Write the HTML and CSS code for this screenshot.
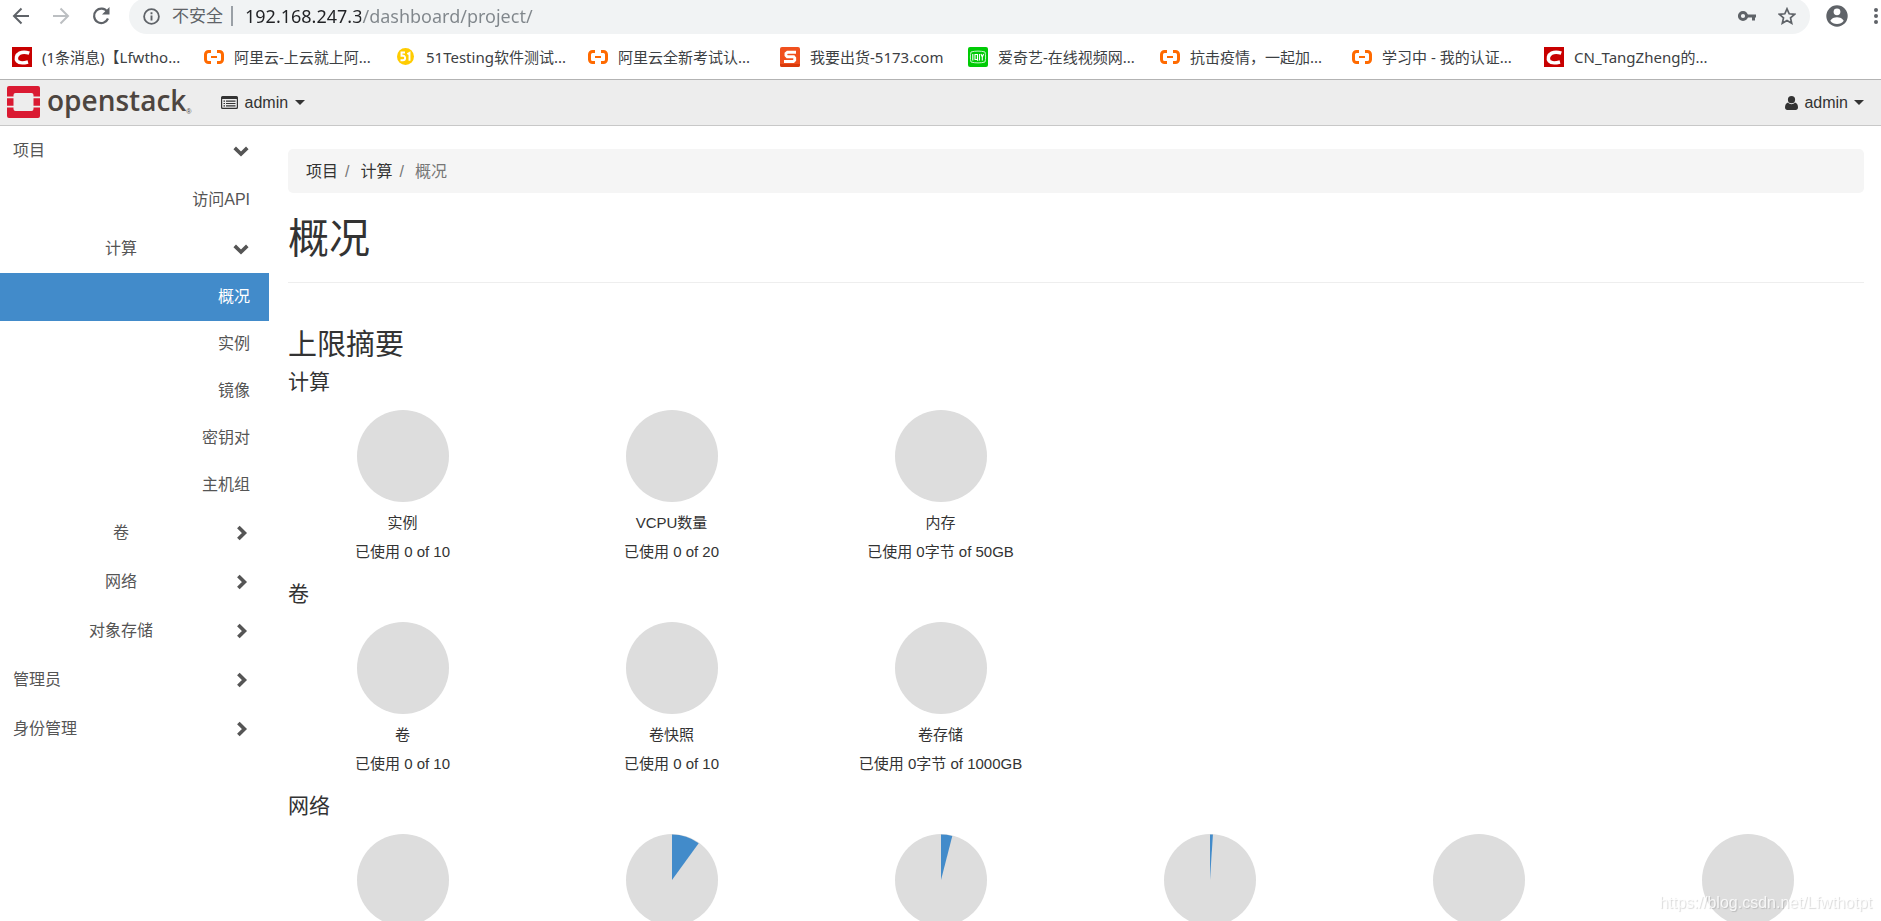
FILE: index.html
```html
<!DOCTYPE html>
<html lang="zh-CN">
<head>
<meta charset="utf-8">
<title>概况 - OpenStack Dashboard</title>
<link rel="stylesheet" href="styles.css">
</head>
<body>
<svg class="defs" aria-hidden="true">
  <symbol id="ali" viewBox="0 0 20 20"><path d="M7 4.500H4.500a3 3 0 0 0-3 3v5a3 3 0 0 0 3 3H7M13 4.500h2.500a3 3 0 0 1 3 3v5a3 3 0 0 1-3 3H13" fill="none" stroke="#ff6a00" stroke-width="3"/><path d="M7 10h6" stroke="#ff6a00" stroke-width="2"/></symbol>
  <symbol id="csdn" viewBox="0 0 20 20"><path fill="#c80000" d="M0 0h20v20H0z"/><path d="M17.300 6.100C14 5 10.500 4.800 7.700 6.100 4.200 7.900 3.500 12 5.300 14.200c2 2.300 6.700 1.800 10.700.8" fill="none" stroke="#fff" stroke-width="3.500"/></symbol>
  <symbol id="down" viewBox="0 0 14 14"><path d="M1.500 4.300 7 9.600l5.500-5.300" fill="none" stroke="currentColor" stroke-width="3.200"/></symbol>
  <symbol id="right" viewBox="0 0 14 14"><path d="M4.700 1.700 10 7l-5.300 5.300" fill="none" stroke="currentColor" stroke-width="3.200"/></symbol>
</svg>

<header class="browser">
  <div class="toolbar">
    <button class="tool" aria-label="后退"><svg width="18" height="18" viewBox="0 0 18 18"><path d="M17 9H2M9.500 1.500 2 9l7.500 7.500" fill="none" stroke="#5f6368" stroke-width="2"/></svg></button>
    <button class="tool" aria-label="前进"><svg width="18" height="18" viewBox="0 0 18 18"><path d="M1 9h15M8.500 1.500 16 9l-7.500 7.500" fill="none" stroke="#bcbfc2" stroke-width="2"/></svg></button>
    <button class="tool" aria-label="重新加载"><svg width="18" height="18" viewBox="0 0 18 18"><path d="M15.300 4.800A7.200 7.200 0 1 0 16 11.500" fill="none" stroke="#5f6368" stroke-width="2.200"/><path d="M17.500 0v7.500H10z" fill="#5f6368"/></svg></button>
    <div class="omnibox">
      <button class="security"><svg width="17" height="17" viewBox="0 0 17 17"><circle cx="8.500" cy="8.500" r="7.400" fill="none" stroke="#5f6368" stroke-width="1.800"/><path d="M8.500 7.500v5M8.500 4.300v2" stroke="#5f6368" stroke-width="1.900"/></svg>不安全</button>
      <input class="url" type="text" aria-label="地址" value="192.168.247.3/dashboard/project/">
      <button class="tool" aria-label="密码"><svg width="18" height="18" viewBox="0 0 18 18"><circle cx="5" cy="9" r="3.600" fill="none" stroke="#5f6368" stroke-width="3"/><path d="M8 9h10M15.500 9v4.500" fill="none" stroke="#5f6368" stroke-width="3"/></svg></button>
      <button class="tool star" aria-label="收藏"><svg width="18" height="18" viewBox="0 0 18 18"><path d="m9 1.800 2.200 5 5.400.5-4.100 3.600 1.200 5.300L9 13.400l-4.700 2.800 1.200-5.300L1.400 7.300l5.400-.5z" fill="none" stroke="#5f6368" stroke-width="1.700"/></svg></button>
    </div>
    <button class="tool profile" aria-label="用户"><svg width="22" height="22" viewBox="0 0 22 22"><circle cx="11" cy="11" r="10.700" fill="#5f6368"/><circle cx="11" cy="6.800" r="3.400" fill="#fff"/><path d="M4.300 15.800c1.200-2.500 4-3.600 6.700-3.600s5.500 1.100 6.700 3.600C16.200 18 13.700 19 11 19s-5.200-1-6.700-3.200z" fill="#fff"/></svg></button>
    <button class="tool more" aria-label="菜单"><svg width="4" height="18" viewBox="0 0 4 18"><circle cx="2" cy="3" r="2" fill="#5f6368"/><circle cx="2" cy="9" r="2" fill="#5f6368"/><circle cx="2" cy="15" r="2" fill="#5f6368"/></svg></button>
  </div>
  <nav class="bookmarks" aria-label="书签">
    <a href="#"><svg><use href="#csdn"/></svg>(1条消息)【Lfwtho...</a>
    <a href="#"><svg><use href="#ali"/></svg>阿里云-上云就上阿...</a>
    <a href="#"><svg viewBox="0 0 20 20"><circle cx="9.500" cy="9.500" r="8.500" fill="#fc0"/><path d="M9 5.500H5.500v3.300h1.700c2.600 0 2.600 4.500-.2 4.500H4.500M11.300 7l2.200-1.200v8" fill="none" stroke="#fff" stroke-width="1.900"/></svg>51Testing软件测试...</a>
    <a href="#"><svg><use href="#ali"/></svg>阿里云全新考试认...</a>
    <a href="#" class="short"><svg viewBox="0 0 20 20"><rect width="20" height="20" rx="2" fill="#f0501e"/><path d="M0 17h20v1a2 2 0 0 1-2 2H2a2 2 0 0 1-2-2z" fill="#d93a0b"/><path d="M16 5.200H7.500L6 6.500v2L7.200 9.700h6.500l1 1.200v2.300l-1.300 1.300H4" fill="none" stroke="#fff" stroke-width="2.900"/></svg>我要出货-5173.com</a>
    <a href="#"><svg viewBox="0 0 20 20"><rect width="20" height="20" rx="2" fill="#00cb05"/><path d="M3 5c4-1.200 10-1.200 14 0 .8 3 .8 7 0 10-4 1.200-10 1.200-14 0-.8-3-.8-7 0-10z" fill="none" stroke="#c9f7ca"/><path d="M4.800 7v6.500M7 7.500h2.500v5H7zM8.800 12l1.200 1.800M11.500 7v6.500M13 7l1.300 3L15.600 7M14.300 10v3.500" fill="none" stroke="#fff" stroke-width="1.100"/></svg>爱奇艺-在线视频网...</a>
    <a href="#"><svg><use href="#ali"/></svg>抗击疫情，一起加...</a>
    <a href="#"><svg><use href="#ali"/></svg>学习中 - 我的认证...</a>
    <a href="#"><svg><use href="#csdn"/></svg>CN_TangZheng的...</a>
  </nav>
</header>

<div class="navbar">
  <a class="brand" href="#">
    <svg width="33" height="32" viewBox="0 0 33 32"><path fill="#da1a32" d="M2 0h29a2 2 0 0 1 2 2v8.500h-6.500V9a2 2 0 0 0-2-2h-16a2 2 0 0 0-2 2v1.500H0V2a2 2 0 0 1 2-2zM0 12.200h6.500v7.600H0zM26.500 12.200H33v7.600h-6.500zM0 21.500h6.500V23a2 2 0 0 0 2 2h16a2 2 0 0 0 2-2v-1.500H33V30a2 2 0 0 1-2 2H2a2 2 0 0 1-2-2z"/></svg>
    <span class="wordmark">openstack</span><span class="reg">®</span>
  </a>
  <button class="dropdown"><svg width="17" height="13" viewBox="0 0 17 13"><path d="M1.500 0h14A1.500 1.500 0 0 1 17 1.500v10a1.500 1.500 0 0 1-1.500 1.500h-14A1.500 1.500 0 0 1 0 11.500v-10A1.500 1.500 0 0 1 1.500 0zM1.200 3v8.300c0 .3.200.5.500.5h13.600c.3 0 .5-.2.500-.5V3z" fill="#333" fill-rule="evenodd"/><path d="M2.500 5.200H4M5 5.200h9.500M2.500 7.500H4M5 7.500h9.500M2.500 9.800H4M5 9.800h9.500" stroke="#333" stroke-width="1.200"/></svg>admin<span class="caret"></span></button>
  <button class="dropdown user"><svg width="13" height="14" viewBox="0 0 13 14"><circle cx="6.500" cy="3.700" r="3.600" fill="#333"/><path d="M3 6.500C1 7 0 9 0 11.500 0 13 1 14 2.300 14h8.400c1.300 0 2.300-1 2.300-2.500C13 9 12 7 10 6.500c-2 2.200-5 2.200-7 0z" fill="#333"/></svg>admin<span class="caret"></span></button>
</div>

<div class="layout">
  <nav class="sidebar" aria-label="面板">
    <a class="row" href="#"><span>项目</span><svg><use href="#down"/></svg></a>
    <a class="row leaf" href="#"><span>访问API</span></a>
    <a class="row group" href="#"><span>计算</span><svg><use href="#down"/></svg></a>
    <a class="row leaf active" href="#"><span>概况</span></a>
    <a class="row leaf sub" href="#"><span>实例</span></a>
    <a class="row leaf sub" href="#"><span>镜像</span></a>
    <a class="row leaf sub" href="#"><span>密钥对</span></a>
    <a class="row leaf sub" href="#"><span>主机组</span></a>
    <a class="row group" href="#"><span>卷</span><svg><use href="#right"/></svg></a>
    <a class="row group" href="#"><span>网络</span><svg><use href="#right"/></svg></a>
    <a class="row group" href="#"><span>对象存储</span><svg><use href="#right"/></svg></a>
    <a class="row" href="#"><span>管理员</span><svg><use href="#right"/></svg></a>
    <a class="row" href="#"><span>身份管理</span><svg><use href="#right"/></svg></a>
  </nav>

  <main class="content">
    <ol class="breadcrumb">
      <li><a href="#">项目</a></li>
      <li><a href="#">计算</a></li>
      <li class="current">概况</li>
    </ol>
    <h1>概况</h1>
    <h2>上限摘要</h2>

    <h3>计算</h3>
    <div class="charts">
      <div class="chart"><svg class="pie" viewBox="0 0 92 92"><circle cx="46" cy="46" r="46"/></svg><p>实例</p><p>已使用 0 of 10</p></div>
      <div class="chart"><svg class="pie" viewBox="0 0 92 92"><circle cx="46" cy="46" r="46"/></svg><p>VCPU数量</p><p>已使用 0 of 20</p></div>
      <div class="chart"><svg class="pie" viewBox="0 0 92 92"><circle cx="46" cy="46" r="46"/></svg><p>内存</p><p>已使用 0字节 of 50GB</p></div>
    </div>

    <h3>卷</h3>
    <div class="charts">
      <div class="chart"><svg class="pie" viewBox="0 0 92 92"><circle cx="46" cy="46" r="46"/></svg><p>卷</p><p>已使用 0 of 10</p></div>
      <div class="chart"><svg class="pie" viewBox="0 0 92 92"><circle cx="46" cy="46" r="46"/></svg><p>卷快照</p><p>已使用 0 of 10</p></div>
      <div class="chart"><svg class="pie" viewBox="0 0 92 92"><circle cx="46" cy="46" r="46"/></svg><p>卷存储</p><p>已使用 0字节 of 1000GB</p></div>
    </div>

    <h3>网络</h3>
    <div class="charts">
      <div class="chart"><svg class="pie" viewBox="0 0 92 92"><circle cx="46" cy="46" r="46"/></svg></div>
      <div class="chart"><svg class="pie" viewBox="0 0 92 92"><circle cx="46" cy="46" r="46"/><path d="M46 46V.5A45.500 45.500 0 0 1 72.700 9.200z"/></svg></div>
      <div class="chart"><svg class="pie" viewBox="0 0 92 92"><circle cx="46" cy="46" r="46"/><path d="M46 46V.5A45.500 45.500 0 0 1 57.300 1.900z"/></svg></div>
      <div class="chart"><svg class="pie" viewBox="0 0 92 92"><circle cx="46" cy="46" r="46"/><path d="M46 46V.5A45.500 45.500 0 0 1 48.900.6z"/></svg></div>
      <div class="chart"><svg class="pie" viewBox="0 0 92 92"><circle cx="46" cy="46" r="46"/></svg></div>
      <div class="chart"><svg class="pie" viewBox="0 0 92 92"><circle cx="46" cy="46" r="46"/></svg></div>
    </div>
  </main>
</div>
<div class="watermark">https://blog.csdn.net/Lfwthotpt</div>
</body>
</html>
```

FILE: styles.css
```css
* { box-sizing: border-box; }
html, body { height: 100%; margin: 0; overflow: hidden; }
body {
  background: #fff;
  color: #333;
  font: 16px/24px "Liberation Sans", "Noto Sans CJK SC", sans-serif;
}
a { color: inherit; text-decoration: none; }
button, input { border: 0; padding: 0; background: none; font: inherit; color: inherit; }
svg { display: block; flex: none; }
.defs { position: absolute; width: 0; height: 0; }

/* Browser chrome */
.browser { font-family: "Noto Sans", "Noto Sans CJK SC", sans-serif; border-bottom: 1px solid #b3b3b3; }
.toolbar { display: flex; align-items: center; height: 34px; padding: 0 0 2px 12px; overflow: hidden; }
.tool { display: flex; margin-right: 22px; }
.omnibox {
  display: flex;
  align-items: center;
  flex: 1;
  height: 36px;
  margin: 0 16px 0 -3px;
  padding-left: 14px;
  border-radius: 18px;
  background: #f1f3f4;
}
.security {
  display: flex;
  align-items: center;
  gap: 12px;
  height: 20px;
  padding-right: 8px;
  border-right: 2px solid #9aa0a6;
  font-size: 17px;
  color: #5f6368;
}
.url {
  flex: 1;
  margin-left: 12px;
  font-size: 18px;
  line-height: 26px;
  background: linear-gradient(90deg, #202124 116px, #80868b 116px);
  -webkit-background-clip: text;
  background-clip: text;
  color: transparent;
}
.star { margin-right: 14px; }
.profile { margin-right: 26px; }
.more { margin-right: 3px; }
.bookmarks { display: flex; height: 45px; padding-left: 12px; align-items: center; }
.bookmarks a {
  display: flex;
  align-items: center;
  gap: 10px;
  flex: 0 0 192px;
  white-space: nowrap;
  font-size: 15px;
  color: #3c4043;
}
.bookmarks a.short { flex-basis: 188px; }
.bookmarks svg { width: 20px; height: 20px; }

/* Top bar */
.navbar {
  display: flex;
  align-items: center;
  height: 46px;
  padding: 0 17px 0 7px;
  background: #ededed;
  border-bottom: 1px solid #c8c8c8;
}
.brand { display: flex; align-items: center; margin-right: 29px; color: #4d4540; }
.brand svg { margin-bottom: 1px; }
.wordmark { margin-left: 7px; padding-bottom: 6px; font: 600 28px/32px "Open Sans", sans-serif; }
.reg { align-self: flex-end; font-size: 7px; line-height: 20px; }
.dropdown { display: flex; align-items: center; gap: 7px; }
.user { margin-left: auto; gap: 6px; }
.caret { border: 5px solid transparent; border-top-color: currentColor; border-bottom: 0; }

/* Layout */
.layout { display: flex; align-items: flex-start; }
.sidebar { flex: 0 0 269px; color: #555; }
.row { display: flex; align-items: center; height: 49px; padding: 0 19px 0 13px; }
.row span { flex: 1; }
.row svg { width: 18px; height: 16px; }
.row.group { padding-left: 10px; }
.group span { text-align: center; }
.leaf span { text-align: right; }
.sub { height: 47px; }
.active + .sub { height: 46px; }
.active { height: 48px; background: #428bca; color: #fff; }

.content { flex: 1; min-width: 0; padding: 23px 17px 0 19px; }
.breadcrumb {
  display: flex;
  height: 44px;
  margin: 0;
  padding: 11px 18px;
  border-radius: 5px;
  background: #f5f5f5;
  list-style: none;
}
.breadcrumb li + li::before { content: "/"; padding: 0 11px 0 7px; color: #777; }
.breadcrumb .current { color: #777; }
h1, h2, h3 { margin: 0; font-weight: 400; }
h1 { padding: 21px 0 18px; border-bottom: 1px solid #eee; font-size: 41px; line-height: 50px; }
h2 { margin-top: 45px; font-size: 29px; line-height: 34px; }
h3 { font-size: 21px; line-height: 40px; }
.charts { display: grid; grid-template-columns: repeat(6, 1fr); margin: 0 -18px 0 -20px; padding: 8px 0; }
.chart { text-align: center; }
.pie { width: 92px; height: 92px; margin: 0 auto 6px; fill: #ddd; }
.pie path { fill: #428bca; }
.chart p { margin: 0; font-size: 15px; line-height: 29px; }

.watermark {
  position: fixed;
  right: 9px;
  bottom: 6px;
  font-size: 16px;
  color: rgba(255, 255, 255, .8);
  text-shadow: 1px 1px 1px rgba(0, 0, 0, .15);
}
```
